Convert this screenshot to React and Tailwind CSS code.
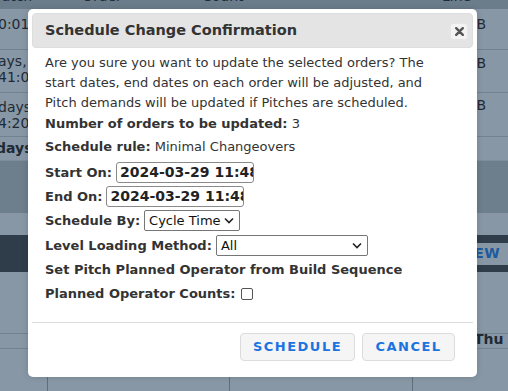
import React from 'react';

const font = { fontFamily: '"DejaVu Sans", Verdana, sans-serif' };

const Chevron = () => (
  <svg width="10" height="7" viewBox="0 0 10 7" className="shrink-0">
    <path d="M1 1.5 L5 5.5 L9 1.5" fill="none" stroke="#222" strokeWidth="1.6" />
  </svg>
);

const Backdrop = () => (
  <div className="flex flex-col w-[508px] h-[391px] overflow-hidden bg-[#8797a5] text-[14px] text-[#1e2a35] whitespace-nowrap">
    {/* header */}
    <div className="h-[9px] shrink-0 bg-[#6b7c8b] flex items-end overflow-hidden pb-[3px] text-[#1e2a35]">
      <span className="leading-[20px] w-[90px] -ml-[8px]">Batch</span>
      <span className="leading-[20px] w-[120px]">Order</span>
      <span className="leading-[20px] w-[240px]">Count</span>
      <span className="leading-[20px]">Line</span>
    </div>
    <div className="h-[41px] shrink-0 border-b border-[#73828f] flex justify-between pt-[6px] leading-[18px]">
      <span className="-ml-[2px]">0:01</span>
      <span className="mr-[22px]">B</span>
    </div>
    <div className="h-[43px] shrink-0 border-b border-[#73828f] flex justify-between pt-[3px] leading-[16px]">
      <span className="-ml-[2px]">ays,<br />41:0</span>
      <span className="mr-[22px] pt-[2px]">B</span>
    </div>
    <div className="h-[44px] shrink-0 border-b border-[#73828f] flex justify-between pt-[2px] leading-[16px]">
      <span className="-ml-[2px] pt-[4px]">days<br />4:20</span>
      <span className="mr-[22px] pt-[2px]">B</span>
    </div>
    <div className="h-[23px] shrink-0 flex items-center font-bold">
      <span className="-ml-[4px]">days</span>
    </div>
    <div className="h-[53px] shrink-0 bg-[#6d7e8c] border-t border-[#7d8d9a]"></div>
    <div className="h-[22px] shrink-0"></div>
    <div className="h-[37px] shrink-0 bg-[#2f3d4b] flex justify-end items-center">
      <div className="h-[22px] w-[90px] bg-[#8797a5] flex items-center justify-end pr-[8px] text-[#1d5a9e] font-bold tracking-wide">
        VIEW
      </div>
    </div>
    <div className="h-[62px] shrink-0 border-b border-[#73828f]"></div>
    <div className="h-[14px] shrink-0 flex justify-end items-start font-bold overflow-hidden">
      <span className="w-[36px] -mr-[2px] leading-[12px] -mt-[1px] overflow-hidden">Thu 3</span>
    </div>
    <div className="flex-1 flex border-t border-[#73828f]">
      <div className="w-[48px] border-r border-[#5f6e7b]"></div>
      <div className="w-[182px] border-r border-[#5f6e7b]"></div>
      <div className="w-[183px] border-r border-[#5f6e7b]"></div>
    </div>
  </div>
);

const Select = ({ label, width }) => (
  <div className={`h-[21px] ${width} border border-[#767676] rounded-[2px] bg-white flex items-center justify-between pl-[4px] pr-[5px] font-normal text-[13px] text-[#111] whitespace-nowrap`}>
    <span>{label}</span>
    <Chevron />
  </div>
);

const DateInput = ({ value, width }) => (
  <div className={`h-[21px] ${width} border border-[#8a8a8a] rounded-[3px] bg-white flex items-center pl-[3px] overflow-hidden whitespace-nowrap text-[14px] font-bold text-[#222]`}>
    {value}
  </div>
);

const Dialog = () => (
  <div className="absolute left-[28px] top-[9px] w-[449px] h-[368px] bg-white rounded-[5px] p-[4px] flex flex-col shadow-[0_0_6px_rgba(0,0,0,0.15)]">
    <div className="h-[35px] rounded-[4px] bg-[#e4e4e4] border border-[#dddddd] flex items-center justify-between pl-[12px] pr-[4px]">
      <span className="text-[14.5px] font-bold text-[#333]">Schedule Change Confirmation</span>
      <button className="w-[18px] h-[17px] mt-[1px] rounded-[3px] bg-[#f3f3f3] border border-[#e6e6e6] flex items-center justify-center">
        <svg width="9" height="9" viewBox="0 0 9 9">
          <path d="M1.2 1.2 L7.8 7.8 M7.8 1.2 L1.2 7.8" stroke="#555" strokeWidth="2.4" strokeLinecap="round" />
        </svg>
      </button>
    </div>
    <div className="flex flex-col pl-[13px] pt-[5px] text-[13px] text-[#333]">
      <p className="leading-[20px] w-[404px]">
        Are you sure you want to update the selected orders? The start dates, end dates on each order will be adjusted, and Pitch demands will be updated if Pitches are scheduled.
      </p>
      <div className="leading-[20px] mt-[1px]"><b>Number of orders to be updated:</b> 3</div>
      <div className="leading-[20px] mt-[3px]"><b>Schedule rule:</b> Minimal Changeovers</div>
      <div className="flex items-center gap-[4px] font-bold mt-[5px]">
        <span>Start On:</span>
        <DateInput value="2024-03-29 11:48" width="w-[138px]" />
      </div>
      <div className="flex items-center gap-[4px] font-bold mt-[3px]">
        <span>End On:</span>
        <DateInput value="2024-03-29 11:48" width="w-[138px]" />
      </div>
      <div className="flex items-center gap-[4px] font-bold mt-[3px]">
        <span>Schedule By:</span>
        <Select label="Cycle Time" width="w-[96px]" />
      </div>
      <div className="flex items-center gap-[4px] font-bold mt-[4px]">
        <span>Level Loading Method:</span>
        <Select label="All" width="w-[152px]" />
      </div>
      <div className="leading-[20px] font-bold mt-[4px]">Set Pitch Planned Operator from Build Sequence</div>
      <div className="flex items-center gap-[5px] font-bold mt-[4px] leading-[20px]">
        <span>Planned Operator Counts:</span>
        <span className="w-[12px] h-[12px] border border-[#555] rounded-[2px] bg-white"></span>
      </div>
    </div>
    <div className="mt-auto border-t border-[#dddddd] flex justify-end gap-[7px] pt-[10px] pb-[12px] pr-[18px]">
      <button className="h-[28px] w-[115px] rounded-[4px] bg-[#f5f5f5] border border-[#dcdcdc] text-[13px] font-bold tracking-[1.5px] text-[#1b73e0]">SCHEDULE</button>
      <button className="h-[28px] w-[93px] rounded-[4px] bg-[#f5f5f5] border border-[#dcdcdc] text-[13px] font-bold tracking-[1.5px] text-[#1b73e0]">CANCEL</button>
    </div>
  </div>
);

export default function App() {
  return (
    <div className="relative w-[508px] h-[391px] overflow-hidden" style={font}>
      <Backdrop />
      <Dialog />
    </div>
  );
}
